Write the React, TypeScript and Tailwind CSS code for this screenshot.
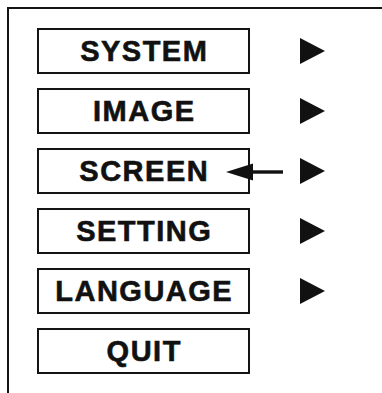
import React from "react";

const items = [
  { label: "SYSTEM", arrow: true },
  { label: "IMAGE", arrow: true },
  { label: "SCREEN", arrow: true, pointer: true },
  { label: "SETTING", arrow: true },
  { label: "LANGUAGE", arrow: true },
  { label: "QUIT", arrow: false },
];

function Tri() {
  return (
    <svg width="25" height="26" viewBox="0 0 25 26">
      <polygon points="0,0 25,13 0,26" fill="#111" />
    </svg>
  );
}

export default function App() {
  return (
    <div
      className="w-[382px] h-[393px] bg-white overflow-hidden pt-[7px] pl-[7px]"
      style={{ fontFamily: '"Liberation Sans", Arial, sans-serif' }}
    >
      <div className="border-t-2 border-l-2 border-[#141414] h-[400px] pt-[19px] pl-[28px]">
        <div className="flex flex-col gap-[14px]">
          {items.map((it) => (
            <div key={it.label} className="flex items-center">
              <div className="relative w-[213px] h-[46px] border-2 border-[#141414] flex items-center justify-center">
                <span className="text-[29px] font-bold tracking-[1.5px] leading-none text-[#111] pl-[1.5px] [-webkit-text-stroke:0.6px_#111]">
                  {it.label}
                </span>
                {it.pointer && (
                  <svg
                    className="absolute left-[187px] top-[13px]"
                    width="60"
                    height="18"
                    viewBox="0 0 60 18"
                  >
                    <polygon points="0,9 27,0.5 27,17.5" fill="#111" />
                    <rect x="20" y="7.3" width="37" height="3.4" fill="#111" />
                  </svg>
                )}
              </div>
              {it.arrow && (
                <div className="ml-[50px] flex items-center">
                  <Tri />
                </div>
              )}
            </div>
          ))}
        </div>
      </div>
    </div>
  );
}
